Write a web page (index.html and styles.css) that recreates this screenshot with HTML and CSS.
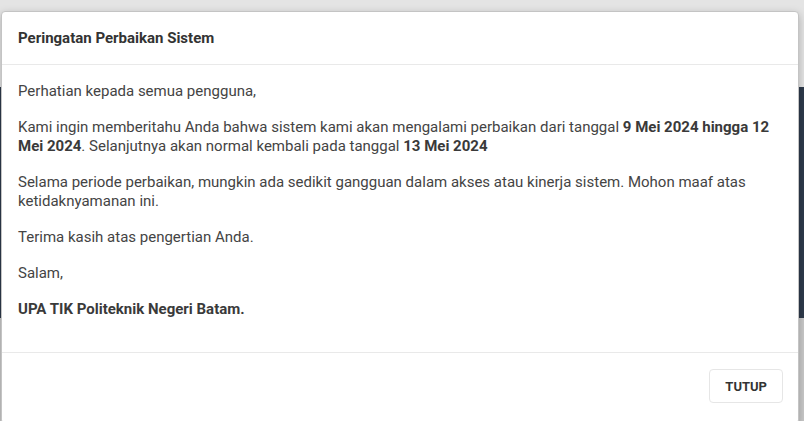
FILE: index.html
```html
<!DOCTYPE html>
<html lang="id">
<head>
    <meta charset="UTF-8">
    <meta name="viewport" content="width=device-width, initial-scale=1.0">
    <title>Peringatan Perbaikan Sistem</title>
    <link rel="stylesheet" href="styles.css">
</head>
<body>
    <div class="page">
        <div class="page-top"></div>
        <div class="page-band"></div>
        <div class="page-bottom"></div>
    </div>

    <div class="modal">
        <div class="modal-header">
            <h4 class="modal-title">Peringatan Perbaikan Sistem</h4>
        </div>
        <div class="modal-body">
            <p>Perhatian kepada semua pengguna,</p>
            <p>Kami ingin memberitahu Anda bahwa sistem kami akan mengalami perbaikan dari tanggal <strong>9 Mei 2024 hingga 12 Mei 2024</strong>. Selanjutnya akan normal kembali pada tanggal <strong>13 Mei 2024</strong></p>
            <p>Selama periode perbaikan, mungkin ada sedikit gangguan dalam akses atau kinerja sistem. Mohon maaf atas ketidaknyamanan ini.</p>
            <p>Terima kasih atas pengertian Anda.</p>
            <p>Salam,</p>
            <p><strong>UPA TIK Politeknik Negeri Batam.</strong></p>
        </div>
        <div class="modal-footer">
            <button class="btn-close">TUTUP</button>
        </div>
    </div>
</body>
</html>
```

FILE: styles.css
```css
html, body {
    margin: 0;
    height: 100%;
}
body {
    font-family: Roboto, "Liberation Sans", Arial, sans-serif;
    font-size: 15px;
    line-height: 19px;
    color: #444;
    background-color: #e9e9e9;
    overflow: hidden;
}
.page {
    display: flex;
    flex-direction: column;
    height: 100%;
}
.page-top {
    height: 87px;
    background-color: #e4e4e4;
}
.page-band {
    height: 231px;
    background-color: #2e3a4b;
}
.page-bottom {
    flex: 1;
    background-color: #c9c9c9;
}
.modal {
    position: absolute;
    top: 11px;
    left: 1px;
    width: 798px;
    background-color: #fff;
    border: 1px solid #c4c4c4;
    border-radius: 4px;
    box-shadow: 0 3px 9px rgba(0, 0, 0, 0.25);
    box-sizing: border-box;
}
.modal-header {
    padding: 16px;
    border-bottom: 1px solid #e9e9e9;
}
.modal-title {
    margin: 0;
    font-size: 15px;
    font-weight: 700;
    line-height: 20px;
    color: #333;
}
.modal-body {
    padding: 17px 16px 16px;
}
.modal-body p {
    margin: 0 0 17px;
}
.modal-body strong {
    color: #3a3a3a;
}
.modal-footer {
    display: flex;
    justify-content: flex-end;
    padding: 16px 15px 20px;
    border-top: 1px solid #e9e9e9;
}
.btn-close {
    height: 34px;
    padding: 0 15px;
    font-family: inherit;
    font-size: 13px;
    font-weight: 700;
    color: #333;
    background-color: #fff;
    border: 1px solid #e6e6e6;
    border-radius: 4px;
    cursor: pointer;
}
```
